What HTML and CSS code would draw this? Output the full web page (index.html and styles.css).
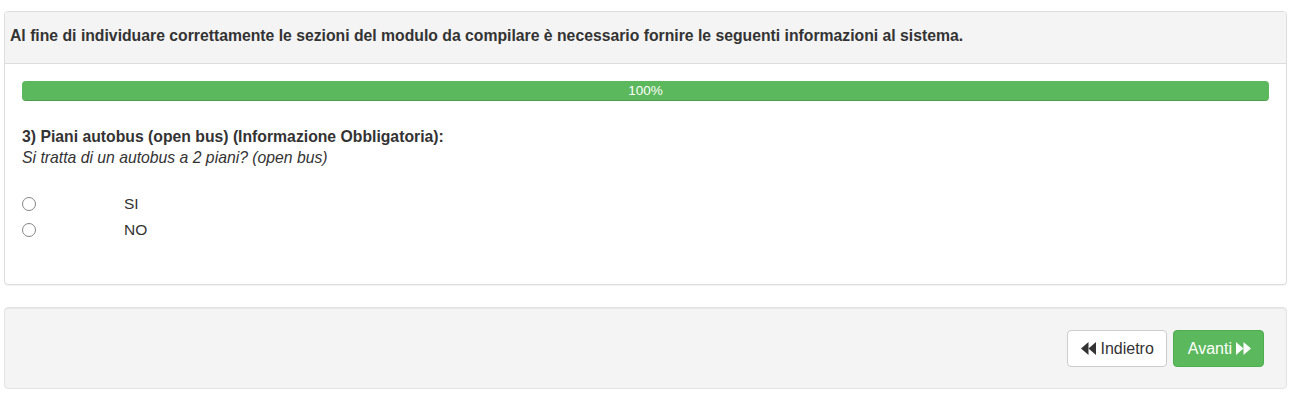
FILE: index.html
```html
<!DOCTYPE html>
<html lang="it">
<head>
<meta charset="utf-8">
<title>Modulo</title>
<link rel="stylesheet" href="styles.css">
</head>
<body>
<div class="panel">
  <div class="panel-heading">Al fine di individuare correttamente le sezioni del modulo da compilare è necessario fornire le seguenti informazioni al sistema.</div>
  <div class="panel-body">
    <div class="progress">
      <div class="progress-bar" style="width:100%">100%</div>
    </div>
    <div class="question">
      <div class="q-title">3) Piani autobus (open bus) (Informazione Obbligatoria):</div>
      <div class="q-text">Si tratta di un autobus a 2 piani? (open bus)</div>
    </div>
    <div class="options">
      <label class="option"><span class="radio"></span><span class="opt-label">SI</span></label>
      <label class="option"><span class="radio"></span><span class="opt-label">NO</span></label>
    </div>
  </div>
</div>
<div class="well">
  <button class="btn btn-default" type="button"><svg class="ico" viewBox="0 0 15 13" width="15" height="13"><polygon points="7.5,0 7.5,13 0,6.5" /><polygon points="15,0 15,13 7.5,6.5" /></svg> Indietro</button>
  <button class="btn btn-success" type="button">Avanti <svg class="ico" viewBox="0 0 15 13" width="15" height="13"><polygon points="0,0 0,13 7.5,6.5" /><polygon points="7.5,0 7.5,13 15,6.5" /></svg></button>
</div>
</body>
</html>
```
FILE: styles.css
```css
* { box-sizing: border-box; }
body {
  margin: 0;
  padding: 11px 4px 0;
  font-family: "Liberation Sans", Arial, sans-serif;
  font-size: 15.75px;
  line-height: 20px;
  color: #333;
  background: #fff;
}
.panel {
  border: 1px solid #ddd;
  border-radius: 4px;
  background: #fff;
  box-shadow: 0 1px 1px rgba(0,0,0,.05);
  margin-bottom: 22px;
}
.panel-heading {
  background: #f4f4f4;
  border-bottom: 1px solid #ddd;
  border-radius: 3px 3px 0 0;
  padding: 14px 5px 17px;
  font-weight: bold;
}
.panel-body {
  padding: 17px 17px 41px;
}
.progress {
  height: 20px;
  border-radius: 4px;
  background: #f5f5f5;
  overflow: hidden;
  box-shadow: inset 0 1px 2px rgba(0,0,0,.1);
}
.progress-bar {
  height: 100%;
  background: #5cb85c;
  color: #fff;
  font-size: 13.5px;
  line-height: 20px;
  text-align: center;
  box-shadow: inset 0 -1px 0 rgba(0,0,0,.15);
}
.question {
  margin-top: 26px;
}
.q-title { font-weight: bold; }
.q-text { font-style: italic; line-height: 21px; }
.options {
  margin-top: 23px;
  display: flex;
  flex-direction: column;
}
.option {
  display: grid;
  grid-template-columns: 102px auto;
  align-items: center;
  height: 26px;
}
.radio {
  width: 14px;
  height: 14px;
  border: 1px solid #858585;
  border-radius: 50%;
  background: #fff;
}
.opt-label {
  font-size: 15.5px;
  color: #333;
}
.well {
  background: #f4f4f4;
  border: 1px solid #e3e3e3;
  border-radius: 4px;
  box-shadow: inset 0 1px 1px rgba(0,0,0,.05);
  padding: 22px 22px 21px;
  display: flex;
  justify-content: flex-end;
  gap: 6px;
}
.btn {
  font-family: "Liberation Sans", Arial, sans-serif;
  font-size: 16px;
  line-height: 23px;
  padding: 6px 12px 6px 13px;
  border: 1px solid #ccc;
  border-radius: 4px;
  display: inline-flex;
  align-items: center;
  gap: 4px;
  cursor: pointer;
}
.btn-default { background: #fff; color: #333; }
.btn-success { background: #5cb85c; border-color: #4cae4c; color: #fff; padding: 6px 12px 6px 14px; }
.ico { fill: currentColor; display: block; }
```
